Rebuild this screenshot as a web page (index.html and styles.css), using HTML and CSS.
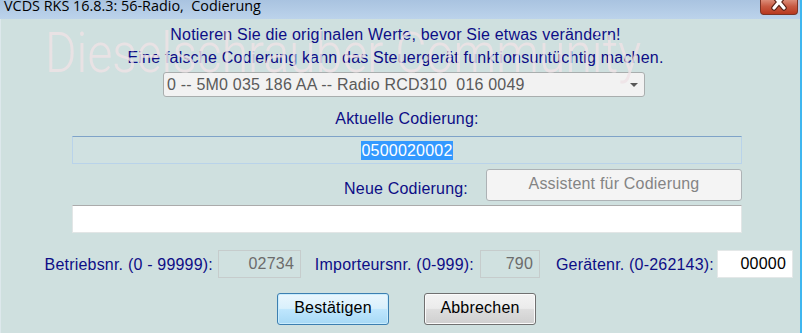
FILE: index.html
```html
<!DOCTYPE html>
<html lang="de">
<head>
<meta charset="utf-8">
<title>VCDS RKS 16.8.3: 56-Radio, Codierung</title>
<link rel="stylesheet" href="styles.css">
</head>
<body>
<div class="window">
  <div class="titlebar">
    <span class="title">VCDS RKS 16.8.3: 56-Radio,&nbsp; Codierung</span>
    <div class="close">
      <svg width="38" height="15" viewBox="0 0 38 15" aria-hidden="true">
        <path d="M14 -4 L24 8 M24 -4 L14 8" stroke="#5a2318" stroke-width="5.5" stroke-linecap="round" fill="none"/>
        <path d="M14 -4 L24 8 M24 -4 L14 8" stroke="#ffffff" stroke-width="3.2" stroke-linecap="round" fill="none"/>
      </svg>
    </div>
  </div>
  <div class="content">
    <p class="notice first">Notieren Sie die originalen Werte, bevor Sie etwas verändern!</p>
    <p class="notice">Eine falsche Codierung kann das Steuergerät funktionsuntüchtig machen.</p>
    <div class="select">
      <span class="select-text">0 -- 5M0 035 186 AA -- Radio RCD310&nbsp; 016 0049</span>
      <span class="arrow"></span>
    </div>
    <div class="caption">Aktuelle Codierung:</div>
    <div class="codebox current"><span class="selected">0500020002</span></div>
    <div class="new-row">
      <span class="new-label">Neue Codierung:</span>
      <button class="btn-disabled" disabled>Assistent für Codierung</button>
    </div>
    <div class="codebox fresh"></div>
    <div class="numbers">
      <span class="num-label l1">Betriebsnr. (0 - 99999):</span>
      <span class="num-box ro b1">02734</span>
      <span class="num-label l2">Importeursnr. (0-999):</span>
      <span class="num-box ro b2">790</span>
      <span class="num-label l3">Gerätenr. (0-262143):</span>
      <span class="num-box edit b3">00000</span>
    </div>
    <div class="actions">
      <button class="btn btn-default">Bestätigen</button>
      <button class="btn">Abbrechen</button>
    </div>
    <div class="watermark">Dieselschrauber Community</div>
  </div>
</div>
</body>
</html>
```
FILE: styles.css
```css
html, body {
  margin: 0;
  padding: 0;
  background: #ffffff;
}
body {
  font-family: "Liberation Sans", Arial, sans-serif;
  font-size: 16px;
  letter-spacing: 0.2px;
  overflow: hidden;
}
.window {
  width: 800px;
  height: 333px;
  border-right: 2px solid #3fb6ef;
  display: flex;
  flex-direction: column;
  overflow: hidden;
}
.titlebar {
  height: 19px;
  flex: none;
  display: flex;
  align-items: flex-start;
  background: linear-gradient(#a9c3e0, #bcd3eb);
  position: relative;
}
.title {
  font-family: "Open Sans", "Liberation Sans", sans-serif;
  font-size: 14.4px;
  letter-spacing: 0;
  line-height: 14px;
  padding-left: 4px;
  margin-top: -1px;
  color: #000000;
  white-space: pre;
}
.close {
  margin-left: auto;
  margin-right: 2px;
  width: 38px;
  height: 15px;
  box-sizing: border-box;
  border: 1px solid #7c3426;
  border-top: none;
  border-radius: 0 0 4px 4px;
  background: linear-gradient(#dc8c78, #c85a42 45%, #b8381f);
  overflow: hidden;
}
.close svg {
  display: block;
  margin-left: -1px;
}
.content {
  flex: 1;
  position: relative;
  background: #cfe0df;
  border-left: 1px solid #dde8ec;
  color: #0d0d86;
}
.notice {
  margin: 0;
  width: 789px;
  text-align: center;
  line-height: 23px;
}
.notice.first {
  padding-top: 4px;
}
.select {
  margin: 3px 0 0 162px;
  width: 482px;
  height: 25px;
  box-sizing: border-box;
  border: 1px solid #a9aeae;
  border-radius: 3px;
  background: #f2f2f2;
  display: flex;
  align-items: center;
  color: #5a5a5a;
}
.select-text {
  padding-left: 3px;
  white-space: pre;
  line-height: 20px;
}
.arrow {
  margin-left: auto;
  margin-right: 6px;
  margin-top: 1px;
  width: 0;
  height: 0;
  border-left: 4px solid transparent;
  border-right: 4px solid transparent;
  border-top: 4px solid #585858;
}
.caption {
  margin: 12px 0 0 71px;
  width: 670px;
  text-align: center;
  line-height: 20px;
}
.codebox {
  margin-left: 71px;
  width: 670px;
  height: 28px;
  box-sizing: border-box;
}
.codebox.current {
  margin-top: 7px;
  border: 1px solid #b9d3ea;
  border-top-color: #7fa3c8;
  background: #d0e1e1;
  display: flex;
  align-items: center;
  justify-content: center;
}
.selected {
  background: #3399ff;
  color: #ffffff;
  line-height: 19px;
  padding: 0 1px;
}
.new-row {
  margin: 5px 0 0 0;
  display: flex;
  align-items: center;
  height: 32px;
}
.new-label {
  width: 467px;
  text-align: right;
  padding-top: 7px;
  line-height: 20px;
}
.btn-disabled {
  margin-left: 18px;
  width: 256px;
  height: 32px;
  box-sizing: border-box;
  border: 1px solid #adb2b5;
  border-radius: 3px;
  background: #f4f4f4;
  color: #848484;
  font-family: "Liberation Sans", Arial, sans-serif;
  font-size: 16px;
  letter-spacing: 0.2px;
  padding: 0 0 2px 0;
}
.codebox.fresh {
  margin-top: 4px;
  background: #ffffff;
  border: 1px solid #e2e6e6;
  border-top-color: #ababab;
}
.numbers {
  margin-top: 17px;
  height: 28px;
  display: flex;
  align-items: center;
}
.num-label {
  text-align: right;
  line-height: 20px;
  padding-top: 1px;
  white-space: nowrap;
}
.l1 { width: 212px; margin-right: 5px; }
.l2 { width: 173px; margin-right: 6px; }
.l3 { width: 174px; margin-right: 3px; }
.num-box {
  height: 28px;
  box-sizing: border-box;
  text-align: right;
  line-height: 20px;
  padding: 3px 6px 0 0;
}
.num-box.ro {
  border: 1px solid #c6cccc;
  background: #d0e1e0;
  color: #6c6c6c;
}
.b1 { width: 83px; }
.b2 { width: 60px; }
.b3 { width: 76px; }
.num-box.edit {
  background: #ffffff;
  border: 1px solid #e4e8e8;
  color: #000000;
}
.actions {
  margin: 15px 0 0 276px;
  display: flex;
  gap: 35px;
}
.btn {
  width: 112px;
  height: 32px;
  box-sizing: border-box;
  border: 1px solid #707070;
  border-radius: 3px;
  background: linear-gradient(#f3f3f3, #ebebeb 48%, #dddddd 52%, #cfcfcf);
  color: #000000;
  font-family: "Liberation Sans", Arial, sans-serif;
  font-size: 16px;
  letter-spacing: 0.2px;
  padding: 0 0 2px 0;
  box-shadow: inset 0 0 0 1px #fbfbfb;
}
.btn-default {
  border-color: #3c7fb1;
  background: linear-gradient(#eaf6fd, #d9f0fc 48%, #bee6fd 52%, #a7d9f5);
  box-shadow: inset 0 0 0 1px #c9ecfd;
}
.watermark {
  position: absolute;
  left: 44px;
  top: -1px;
  font-family: Roboto, "Liberation Sans", sans-serif;
  font-weight: 300;
  font-size: 56px;
  letter-spacing: 0;
  line-height: 70px;
  color: rgba(238, 226, 229, 0.82);
  white-space: nowrap;
  pointer-events: none;
  transform: scaleX(0.86);
  transform-origin: left center;
}
```
